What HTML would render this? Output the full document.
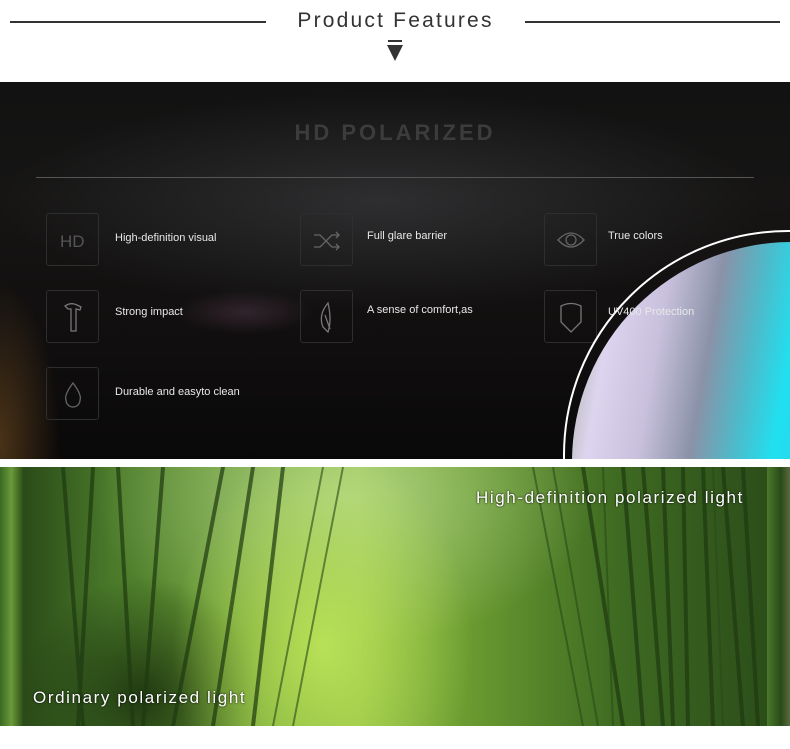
<!DOCTYPE html>
<html><head><meta charset="utf-8"><style>
*{margin:0;padding:0;box-sizing:border-box}
body{width:790px;height:749px;background:#fff;position:relative;overflow:hidden;font-family:"Liberation Sans",sans-serif}
.hl{position:absolute;top:21px;height:2px;background:#333}
.title{position:absolute;left:266px;width:259px;top:9px;text-align:center;font-size:21px;letter-spacing:2.2px;color:#333}
.dark{position:absolute;left:0;top:82px;width:790px;height:377px;overflow:hidden;
background:
radial-gradient(ellipse 60px 160px at 0px 360px,rgba(150,100,40,.45),transparent 100%),
radial-gradient(ellipse 70px 22px at 245px 230px,rgba(90,60,80,.45),transparent 100%),
radial-gradient(ellipse 380px 110px at 380px 120px,rgba(70,70,75,.5),transparent 100%),
linear-gradient(#121212,#161514 30%,#100e0e 70%,#0a0909)}
.hd{position:absolute;top:38px;width:790px;text-align:center;font-size:22px;font-weight:bold;letter-spacing:3px;color:#3c3c3c}
.rule{position:absolute;left:36px;top:95px;width:718px;height:1px;background:#555}
.box{position:absolute;width:53px;height:53px;border:1px solid #2e2e2e;border-radius:3px}
.box svg{position:absolute;left:0;top:0}
.t{position:absolute;color:#e8e8e8;font-size:11px}
.lens{position:absolute;left:563px;top:148px;width:450px;height:450px;border-radius:50%;border:2px solid #fff}
.lens2{position:absolute;left:572px;top:160px;width:440px;height:440px;border-radius:50%;
background:linear-gradient(100deg,#c8c8c8 0%,#b8b8b8 4%,#ddd5ef 10%,#c8c0dc 20%,#8a92a8 30%,#50b8c8 38%,#20e0f0 46%,#30c8e8 60%)}
.forest{position:absolute;left:0;top:467px;width:790px;height:259px;overflow:hidden;background:#000}
.img{position:absolute;left:23px;top:0;width:744px;height:259px;
background:
radial-gradient(ellipse 150px 200px at 300px 180px,rgba(190,230,90,.9),transparent 100%),
radial-gradient(ellipse 120px 120px at 120px 230px,rgba(20,40,10,.8),transparent 100%),
radial-gradient(ellipse 250px 150px at 320px 30px,rgba(200,230,170,.6),transparent 100%),
linear-gradient(90deg,#2a4a18 0%,#4a7a2a 12%,#78a83a 35%,#8cba42 45%,#6a9a30 60%,#3e6a22 80%,#2c4e1a 100%)}
.side{position:absolute;top:0;width:23px;height:259px}
.ft{position:absolute;color:#fff;font-size:17px;letter-spacing:1.6px;text-shadow:0 0 2px #000}
</style></head><body>
<div class="hl" style="left:10px;width:256px"></div>
<div class="hl" style="left:525px;width:255px"></div>
<div class="title">Product Features</div>
<svg style="position:absolute;left:386px;top:40px" width="18" height="22"><rect x="2" y="0" width="14" height="2" fill="#333"/><path d="M1 5 L17 5 L9 21 Z" fill="#333"/></svg>

<div class="dark">
<div class="hd">HD POLARIZED</div>
<div class="rule"></div>

<div class="box" style="left:46px;top:131px"><svg width="53" height="53"><text x="13" y="33" font-size="17" fill="#555" font-family="Liberation Sans">HD</text></svg></div>
<div class="t" style="left:115px;top:150px">High-definition visual</div>
<div class="box" style="left:300px;top:131px"><svg width="53" height="53" fill="none" stroke="#666" stroke-width="1.3"><path d="M13 21h6l12 12h7M13 33h6l12-12h7M35 18l3 3-3 3M35 30l3 3-3 3"/></svg></div>
<div class="t" style="left:367px;top:148px">Full glare barrier</div>
<div class="box" style="left:544px;top:131px"><svg width="53" height="53" fill="none" stroke="#666" stroke-width="1.3"><path d="M13 26q13-14 26 0q-13 14-26 0z"/><circle cx="26" cy="26" r="5"/></svg></div>
<div class="t" style="left:608px;top:148px">True colors</div>

<div class="box" style="left:46px;top:208px"><svg width="53" height="53" fill="none" stroke="#777" stroke-width="1.3"><path d="M18 15q6-4 12-1l4 2-1 3-4-1v22h-5V18h-3z"/></svg></div>
<div class="t" style="left:115px;top:224px">Strong impact</div>
<div class="box" style="left:300px;top:208px"><svg width="53" height="53" fill="none" stroke="#777" stroke-width="1.3"><path d="M27 12q-10 12-5 24l5 5q4-12 0-29zM24 24l5 14"/></svg></div>
<div class="t" style="left:367px;top:222px">A sense of comfort,as</div>
<div class="box" style="left:544px;top:208px"><svg width="53" height="53" fill="none" stroke="#777" stroke-width="1.3"><path d="M16 15q10-5 20 0v16l-10 10-10-10z"/></svg></div>

<div class="box" style="left:46px;top:285px"><svg width="53" height="53" fill="none" stroke="#666" stroke-width="1.3"><path d="M26 15q-9 12-7 17a7 7 0 0 0 14 0q2-5-7-17z"/></svg></div>
<div class="t" style="left:115px;top:304px">Durable and easyto clean</div>

<div class="lens"></div>
<div class="lens2"></div>
<div class="t" style="left:608px;top:224px">UV400 Protection</div>
</div>

<div class="forest">
<div class="side" style="left:0;background:linear-gradient(90deg,#3a6a22,#6a9a3a 50%,#2e5018)"></div>
<div class="side" style="left:767px;background:linear-gradient(90deg,#4a7a2a,#2a4a18 60%,#5a6a40)"></div>
<div class="img">
<svg width="744" height="259" style="position:absolute;left:0;top:0" stroke-linecap="round">
<g stroke="#1e3a10" stroke-width="4" opacity=".7">
<path d="M40 0 L60 259M70 0 L55 259M95 0 L110 259M140 0 L120 259M200 0 L150 259M230 0 L190 259M260 0 L230 259"/>
<path d="M560 0 L600 259M600 0 L620 259M640 0 L650 259M680 0 L690 259M700 0 L720 259M720 0 L735 259M620 0 L640 259M660 0 L665 259"/>
</g>
<g stroke="#2a4a18" stroke-width="2" opacity=".6">
<path d="M510 0 L560 259M530 0 L575 259M580 0 L590 259M690 0 L700 259M300 0 L250 259M320 0 L270 259"/>
</g>
</svg>
<div class="ft" style="left:453px;top:21px">High-definition polarized light</div>
<div class="ft" style="left:10px;top:221px">Ordinary polarized light</div>
</div>
</div>
</body></html>
